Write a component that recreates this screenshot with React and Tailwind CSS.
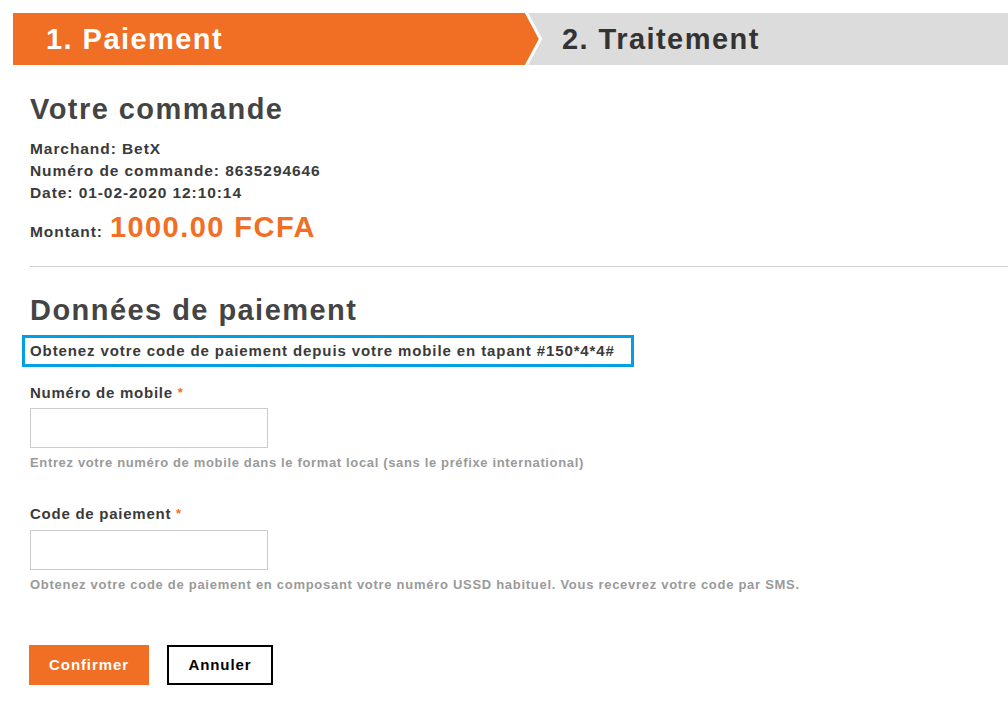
export default function App() {
  const font = { fontFamily: '"Liberation Sans", Arial, sans-serif' };
  return (
    <div className="w-[1008px] h-[704px] bg-white overflow-hidden text-[#333]" style={font}>
      {/* Steps header */}
      <div className="mt-[13px] ml-[13px] flex h-[52px] bg-[#dcdcdc]">
        <div className="w-[512px] bg-[#f06f24] flex items-center pl-[33px]">
          <span className="text-white font-bold text-[29px] leading-none tracking-[0.05em]">1. Paiement</span>
        </div>
        <svg width="20" height="52" viewBox="0 0 20 52" className="block shrink-0">
          <polygon points="0,0 1,0 15,26 1,52 0,52" fill="#f06f24" />
          <polyline points="1,-1 15.5,26 1,53" fill="none" stroke="#ffffff" strokeWidth="3" />
        </svg>
        <div className="flex items-center pl-[17px]">
          <span className="text-[#333] font-bold text-[29px] leading-none tracking-[0.05em]">2. Traitement</span>
        </div>
      </div>

      <div className="pl-[30px]">
        <h1 className="mt-[30px] text-[29px] leading-[28px] font-bold text-[#444] tracking-[0.05em]">Votre commande</h1>
        <div className="mt-[15px] text-[15.5px] leading-[22px] font-bold text-[#3a3a3a] tracking-[0.06em]">
          <div>Marchand: BetX</div>
          <div>Numéro de commande: 8635294646</div>
          <div>Date: 01-02-2020 12:10:14</div>
        </div>
        <div className="mt-[9px] flex items-baseline gap-[7px] font-bold">
          <span className="text-[15.5px] text-[#3a3a3a] tracking-[0.06em]">Montant:</span>
          <span className="text-[29px] leading-[28px] text-[#f06f24] tracking-[0.05em]">1000.00 FCFA</span>
        </div>
        <div className="mt-[23px] h-px bg-[#cfcfcf]" />

        <h2 className="mt-[29px] text-[29px] leading-[28px] font-bold text-[#444] tracking-[0.05em]">Données de paiement</h2>
        <div className="mt-[11px] -ml-[8px] inline-flex items-center h-[32px] border-[3px] border-[#00a0e3] pl-[5px] pr-[16px]">
          <span className="text-[15px] font-bold text-[#3a3a3a] tracking-[0.06em]">Obtenez votre code de paiement depuis votre mobile en tapant #150*4*4#</span>
        </div>

        <div className="mt-[16px] text-[15px] leading-[20px] font-bold text-[#3a3a3a] tracking-[0.05em]">
          Numéro de mobile <span className="text-[#f06f24] text-[13px] align-top">*</span>
        </div>
        <input type="text" className="mt-[5px] block w-[238px] h-[40px] border border-[#cccccc] outline-none" />
        <div className="mt-[6px] text-[13px] leading-[18px] font-bold text-[#9a9a9a] tracking-[0.05em]">
          Entrez votre numéro de mobile dans le format local (sans le préfixe international)
        </div>

        <div className="mt-[32px] text-[15px] leading-[20px] font-bold text-[#3a3a3a] tracking-[0.05em]">
          Code de paiement <span className="text-[#f06f24] text-[13px] align-top">*</span>
        </div>
        <input type="text" className="mt-[6px] block w-[238px] h-[40px] border border-[#cccccc] outline-none" />
        <div className="mt-[6px] text-[13px] leading-[18px] font-bold text-[#9a9a9a] tracking-[0.055em]">
          Obtenez votre code de paiement en composant votre numéro USSD habituel. Vous recevrez votre code par SMS.
        </div>

        <div className="mt-[51px] flex gap-[18px] -ml-px">
          <button className="w-[120px] h-[40px] bg-[#f06f24] text-white font-bold text-[15px] tracking-[0.06em]">Confirmer</button>
          <button className="w-[106px] h-[40px] border-2 border-black bg-white text-black font-bold text-[15px] tracking-[0.06em]">Annuler</button>
        </div>
      </div>
    </div>
  );
}
